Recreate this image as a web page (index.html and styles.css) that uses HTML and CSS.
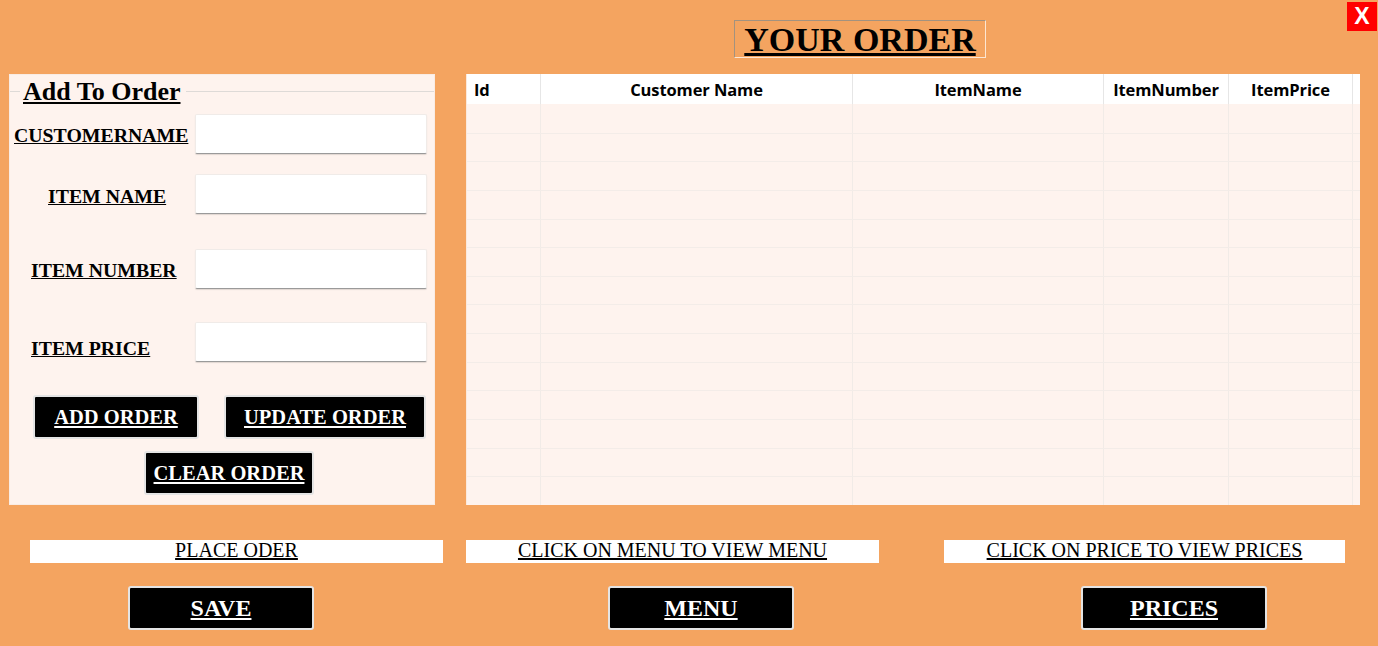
FILE: index.html
```html
<!DOCTYPE html>
<html>
<head>
<meta charset="utf-8">
<title>Your Order</title>
<link rel="stylesheet" href="styles.css">
</head>
<body>
<div class="page">
  <button class="close">X</button>
  <header class="top"><h1 class="title">YOUR ORDER</h1></header>
  <main class="main">
    <section class="panel">
      <div class="legend"><span>Add To Order</span></div>
      <div class="row r1"><label class="lbl l1">CUSTOMERNAME</label><input class="field" type="text"></div>
      <div class="row r2"><label class="lbl l2">ITEM NAME</label><input class="field" type="text"></div>
      <div class="row r3"><label class="lbl l3">ITEM NUMBER</label><input class="field" type="text"></div>
      <div class="row r4"><label class="lbl l4">ITEM PRICE</label><input class="field" type="text"></div>
      <div class="btn-row"><button class="btn add">ADD ORDER</button><button class="btn upd">UPDATE ORDER</button></div>
      <div class="btn-row2"><button class="btn clr">CLEAR ORDER</button></div>
    </section>
    <section class="grid">
      <div class="thead">
        <div class="th id">Id</div>
        <div class="th">Customer Name</div>
        <div class="th">ItemName</div>
        <div class="th">ItemNumber</div>
        <div class="th">ItemPrice</div>
        <div class="th last"></div>
      </div>
      <div class="tbody">
        <div class="tr"><div class="td"></div><div class="td"></div><div class="td"></div><div class="td"></div><div class="td"></div><div class="td last"></div></div>
        <div class="tr"><div class="td"></div><div class="td"></div><div class="td"></div><div class="td"></div><div class="td"></div><div class="td last"></div></div>
        <div class="tr"><div class="td"></div><div class="td"></div><div class="td"></div><div class="td"></div><div class="td"></div><div class="td last"></div></div>
        <div class="tr"><div class="td"></div><div class="td"></div><div class="td"></div><div class="td"></div><div class="td"></div><div class="td last"></div></div>
        <div class="tr"><div class="td"></div><div class="td"></div><div class="td"></div><div class="td"></div><div class="td"></div><div class="td last"></div></div>
        <div class="tr"><div class="td"></div><div class="td"></div><div class="td"></div><div class="td"></div><div class="td"></div><div class="td last"></div></div>
        <div class="tr"><div class="td"></div><div class="td"></div><div class="td"></div><div class="td"></div><div class="td"></div><div class="td last"></div></div>
        <div class="tr"><div class="td"></div><div class="td"></div><div class="td"></div><div class="td"></div><div class="td"></div><div class="td last"></div></div>
        <div class="tr"><div class="td"></div><div class="td"></div><div class="td"></div><div class="td"></div><div class="td"></div><div class="td last"></div></div>
        <div class="tr"><div class="td"></div><div class="td"></div><div class="td"></div><div class="td"></div><div class="td"></div><div class="td last"></div></div>
        <div class="tr"><div class="td"></div><div class="td"></div><div class="td"></div><div class="td"></div><div class="td"></div><div class="td last"></div></div>
        <div class="tr"><div class="td"></div><div class="td"></div><div class="td"></div><div class="td"></div><div class="td"></div><div class="td last"></div></div>
        <div class="tr"><div class="td"></div><div class="td"></div><div class="td"></div><div class="td"></div><div class="td"></div><div class="td last"></div></div>
        <div class="tr"><div class="td"></div><div class="td"></div><div class="td"></div><div class="td"></div><div class="td"></div><div class="td last"></div></div>
      </div>
    </section>
  </main>
  <div class="notes">
    <div class="note n1"><span>PLACE ODER</span></div>
    <div class="note n2"><span>CLICK ON MENU TO VIEW MENU</span></div>
    <div class="note n3"><span>CLICK ON PRICE TO VIEW PRICES</span></div>
  </div>
  <div class="actions">
    <button class="btn big save">SAVE</button>
    <button class="btn big menu">MENU</button>
    <button class="btn big prices">PRICES</button>
  </div>
</div>
</body>
</html>
```

FILE: styles.css
```css
body {
  margin: 0;
  background: #f4a460;
  font-family: "Liberation Serif", serif;
}

.page {
  width: 1378px;
  height: 646px;
  position: relative;
  overflow: hidden;
}

.close {
  position: absolute;
  top: 2px;
  left: 1347px;
  width: 30px;
  height: 29px;
  padding: 0;
  border: none;
  background: #ff0000;
  color: #fff;
  font: bold 23px/29px "Liberation Sans", Arial, sans-serif;
}

.top {
  height: 74px;
  box-sizing: border-box;
  padding: 20px 0 0 734px;
}

.title {
  margin: 0;
  width: 252px;
  height: 38px;
  box-sizing: border-box;
  border: 1px solid;
  border-color: #a3927f #fde6d2 #fde6d2 #a3927f;
  font: bold 34px/37px "Liberation Serif", serif;
  text-align: center;
  text-decoration: underline;
  color: #000;
}

.main {
  display: flex;
  gap: 31px;
  padding-left: 9px;
  height: 431px;
}

.panel {
  width: 426px;
  box-sizing: border-box;
  background: #fef3ee;
  border: 1px solid #f9ece4;
}

.legend {
  display: flex;
  align-items: center;
  height: 32px;
}

.legend::before {
  content: "";
  width: 10px;
  border-top: 1px solid #dedad7;
}

.legend::after {
  content: "";
  flex: 1;
  border-top: 1px solid #dedad7;
}

.legend span {
  padding: 2px 5px 0 3px;
  font: bold 26px/1 "Liberation Serif", serif;
  text-decoration: underline;
  color: #000;
}

.row {
  display: flex;
  height: 40px;
}

.r1 { margin-top: 7px; }
.r2 { margin-top: 20px; }
.r3 { margin-top: 35px; }
.r4 { margin-top: 33px; }

.lbl {
  width: 185px;
  box-sizing: border-box;
  display: flex;
  align-items: center;
  font: bold 19.8px/1 "Liberation Serif", serif;
  text-decoration: underline;
  color: #000;
  white-space: nowrap;
}

.l1 { padding: 4px 0 0 4px; }
.l2 { padding: 6px 0 0 38px; }
.l3 { padding: 4px 0 0 21px; }
.l4 { padding: 14px 0 0 21px; }

.field {
  width: 232px;
  height: 40px;
  box-sizing: border-box;
  margin: 0;
  background: #fff;
  border: 1px solid #f0ebe8;
  border-bottom: 1px solid #9a9a9a;
  border-radius: 2px;
  box-shadow: 0 1px 1px rgba(0, 0, 0, 0.12);
}

.btn {
  box-sizing: border-box;
  height: 44px;
  padding: 0;
  background: #000;
  color: #fff;
  border: 2px solid #e4e4e4;
  border-radius: 3px;
  font: bold 20.5px/1 "Liberation Serif", serif;
  text-decoration: underline;
}

.btn-row {
  display: flex;
  gap: 25px;
  margin-top: 33px;
  padding-left: 23px;
}

.add { width: 166px; }
.upd { width: 202px; }

.btn-row2 {
  margin-top: 12px;
  padding-left: 134px;
}

.clr { width: 170px; }

.grid {
  width: 894px;
  display: flex;
  flex-direction: column;
  background: #fef3ee;
  border-left: 1px solid #fbe9dd;
  box-sizing: border-box;
}

.thead,
.tr {
  display: grid;
  grid-template-columns: 74px 312px 251px 125px 124px 7px;
}

.thead {
  height: 30px;
  background: #fff;
}

.th {
  display: flex;
  align-items: center;
  justify-content: center;
  border-right: 1px solid #e6e6e6;
  font: 700 16.5px "Open Sans", sans-serif;
  letter-spacing: -0.1px;
  color: #000;
}

.th.id {
  justify-content: flex-start;
  padding-left: 7px;
}

.th.last,
.td.last {
  border-right: none;
}

.tbody {
  flex: 1;
  display: grid;
  grid-template-rows: repeat(14, 1fr);
}

.tr {
  border-top: 1px solid #f3ece8;
}

.tr:first-child {
  border-top: none;
}

.td {
  border-right: 1px solid #f1ebe7;
}

.notes {
  display: flex;
  height: 23px;
  margin-top: 35px;
  padding-left: 30px;
}

.note {
  background: #fff;
  font: 20px/21px "Liberation Serif", serif;
  text-align: center;
  color: #000;
}

.note span {
  text-decoration: underline;
}

.n1 { width: 413px; }
.n2 { width: 413px; margin-left: 23px; }
.n3 { width: 401px; margin-left: 65px; }

.actions {
  display: flex;
  margin-top: 23px;
  padding-left: 128px;
}

.big {
  width: 186px;
  height: 44px;
  font-size: 24px;
}

.menu { margin-left: 294px; }
.prices { margin-left: 287px; }
```
